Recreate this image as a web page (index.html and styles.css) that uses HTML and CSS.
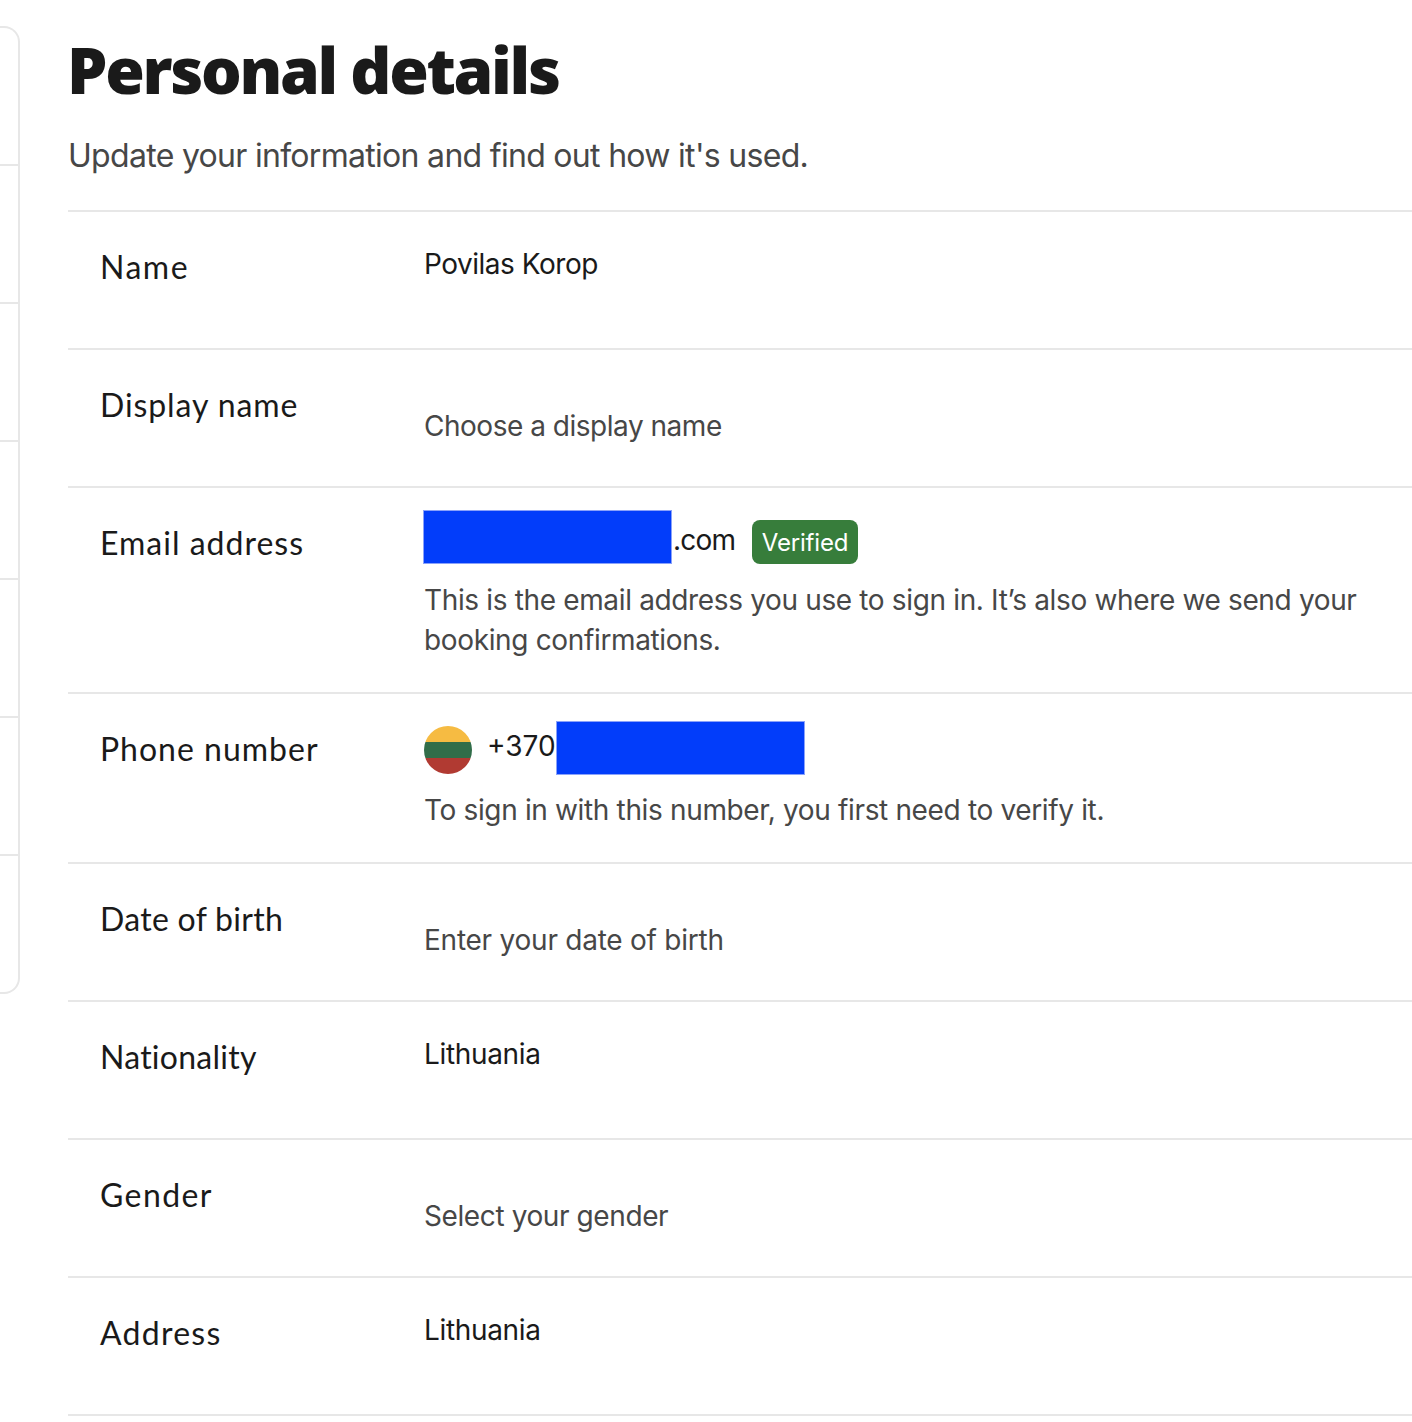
FILE: index.html
```html
<!DOCTYPE html>
<html lang="en">
<head>
<meta charset="utf-8">
<title>Personal details</title>
<link rel="stylesheet" href="styles.css">
</head>
<body>
<div class="page">
  <nav class="side-menu" aria-label="Account">
    <div class="side-item"></div>
    <div class="side-item"></div>
    <div class="side-item"></div>
    <div class="side-item"></div>
    <div class="side-item"></div>
    <div class="side-item"></div>
    <div class="side-item"></div>
  </nav>
  <main class="content">
    <h1 class="title">Personal details</h1>
    <p class="subtitle">Update your information and find out how it's used.</p>
    <section class="row">
      <h2 class="label label-name">Name</h2>
      <div class="value"><p class="text v-name">Povilas Korop</p></div>
    </section>
    <section class="row">
      <h2 class="label label-display">Display name</h2>
      <div class="value"><p class="text hint lower v-display">Choose a display name</p></div>
    </section>
    <section class="row row-email">
      <h2 class="label label-email">Email address</h2>
      <div class="value">
        <div class="email-line"><span class="redacted"></span><span class="text v-com">.com</span><span class="badge">Verified</span></div>
        <p class="text hint">This is the email address you use to sign in. It’s also where we send your<br>booking confirmations.</p>
      </div>
    </section>
    <section class="row row-phone">
      <h2 class="label label-phone">Phone number</h2>
      <div class="value">
        <div class="phone-line">
          <svg class="flag" viewBox="0 0 48 48" aria-hidden="true"><clipPath id="round"><circle cx="24" cy="24" r="24"/></clipPath><g clip-path="url(#round)"><path fill="#f6bb42" d="M0 0h48v16H0z"/><path fill="#316d49" d="M0 16h48v16H0z"/><path fill="#b13a32" d="M0 32h48v16H0z"/></g></svg>
          <span class="text v-code">+370</span><span class="redacted"></span>
        </div>
        <p class="text hint">To sign in with this number, you first need to verify it.</p>
      </div>
    </section>
    <section class="row">
      <h2 class="label label-birth">Date of birth</h2>
      <div class="value"><p class="text hint lower v-birth">Enter your date of birth</p></div>
    </section>
    <section class="row">
      <h2 class="label label-nation">Nationality</h2>
      <div class="value"><p class="text">Lithuania</p></div>
    </section>
    <section class="row">
      <h2 class="label label-gender">Gender</h2>
      <div class="value"><p class="text hint lower v-gender">Select your gender</p></div>
    </section>
    <section class="row">
      <h2 class="label label-address">Address</h2>
      <div class="value"><p class="text">Lithuania</p></div>
    </section>
    <div class="row"></div>
  </main>
</div>
</body>
</html>
```
FILE: styles.css
```css
* { box-sizing: border-box; margin: 0; padding: 0; }
body { background: #fff; color: #1a1a1a; font-family: Inter, "Liberation Sans", sans-serif; overflow: hidden; }
.page { display: flex; width: 1412px; height: 1422px; overflow: hidden; }
.side-menu { flex: none; width: 20px; height: 968px; margin-top: 26px; border: 2px solid #e7e7e7; border-left: 0; border-radius: 0 16px 16px 0; }
.side-item { height: 138px; border-bottom: 2px solid #e7e7e7; }
.side-item:last-child { border-bottom: 0; }
.content { flex: none; width: 1344px; margin-left: 48px; }
.title { height: 128px; margin-left: -1px; padding-top: 30px; font: 800 64px/80px "Open Sans", sans-serif; letter-spacing: -2.3px; white-space: nowrap; }
.subtitle { height: 82px; padding-top: 8px; font-size: 32px; line-height: 40px; letter-spacing: -0.7px; color: #474747; white-space: nowrap; }
.row { display: flex; height: 138px; padding-left: 32px; border-top: 2px solid #e7e7e7; }
.row-email { height: 206px; }
.row-phone { height: 170px; }
.label { flex: none; width: 324px; padding-top: 35px; font: 400 32px/40px Lato, sans-serif; letter-spacing: 1px; white-space: nowrap; }
.label-name { letter-spacing: 1.5px; }
.label-display { letter-spacing: 0.9px; }
.label-birth { letter-spacing: 0.3px; }
.label-nation { letter-spacing: 0.25px; }
.label-gender { letter-spacing: 1.4px; }
.label-address { letter-spacing: 1.25px; }
.value { flex: 1; padding-top: 32px; }
.text { font-size: 28px; line-height: 40px; letter-spacing: -0.35px; white-space: nowrap; }
.v-name { letter-spacing: -0.48px; }
.v-display { letter-spacing: -0.48px; }
.v-birth { letter-spacing: -0.24px; }
.v-gender { letter-spacing: -0.4px; }
.hint { color: #474747; }
.lower { margin-top: 24px; }
.row-email .value { padding-top: 22px; }
.email-line { display: flex; height: 70px; margin-left: -1px; }
.redacted { flex: none; width: 249px; height: 54px; border: 1px solid #8aa2fa; background: #023dfa; }
.v-com { margin: 10px 0 0 1px; width: 63px; letter-spacing: -0.8px; }
.badge { margin: 10px 0 0 16px; width: 106px; height: 44px; border-radius: 8px; background: #377d3b; color: #fff; font-size: 24px; line-height: 46px; letter-spacing: -0.2px; text-align: center; }
.row-phone .value { padding-top: 27px; }
.phone-line { display: flex; height: 69px; }
.flag { width: 48px; height: 48px; margin: 5px 15px 0 0; }
.v-code { width: 69px; margin-top: 5px; letter-spacing: 0; }
```
